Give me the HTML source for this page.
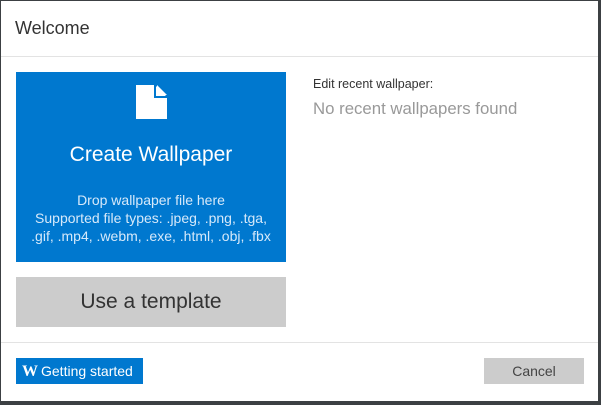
<!DOCTYPE html>
<html><head><style>
html,body{margin:0;padding:0;}
body{width:601px;height:405px;background:#3c4043;position:relative;overflow:hidden;font-family:"Liberation Sans",Arial,sans-serif;}
.dlg{position:absolute;left:1px;top:1px;width:597px;height:400px;background:#fff;}
.title{position:absolute;left:14px;top:17px;font-size:18px;color:#333;}
.sep{position:absolute;left:0;width:597px;height:1px;background:#e3e3e3;}
.blue{position:absolute;left:15px;top:71px;width:270px;height:190px;background:#0078cf;color:#fff;text-align:center;}
.blue h1{margin:0;position:absolute;top:71px;width:100%;font-size:21px;font-weight:normal;}
.blue p{margin:0;position:absolute;top:119px;width:100%;font-size:14px;line-height:18px;color:#d6e9fa;}
.tmpl{position:absolute;left:15px;top:276px;width:270px;height:50px;background:#cccccc;color:#333;font-size:21px;text-align:center;line-height:50px;}
.edit{position:absolute;left:312px;top:76px;font-size:12.5px;color:#333;}
.none{position:absolute;left:312px;top:98px;font-size:16.8px;color:#999;}
.gs{position:absolute;left:15px;top:357px;width:127px;height:26px;background:#0078cf;color:#fff;font-size:14px;line-height:26px;}
.gs b{font-family:"Liberation Serif",serif;font-size:16px;margin-left:6px;margin-right:3px;}
.cancel{position:absolute;left:483px;top:357px;width:100px;height:26px;background:#cccccc;color:#444;font-size:14px;line-height:26px;text-align:center;}
</style></head><body>
<div class="dlg">
<div class="title">Welcome</div>
<div class="sep" style="top:55px"></div>
<div class="blue">
<svg style="position:absolute;left:120px;top:13px" width="32" height="34" viewBox="0 0 32 34"><path d="M0 0H19L31 12V34H0Z" fill="#fff"/><path d="M21 0L31 10H21Z" fill="#fff"/><path d="M19 0V12H31" fill="none" stroke="#0078cf" stroke-width="2"/></svg>
<h1>Create Wallpaper</h1>
<p>Drop wallpaper file here<br>Supported file types: .jpeg, .png, .tga,<br>.gif, .mp4, .webm, .exe, .html, .obj, .fbx</p>
</div>
<div class="tmpl">Use a template</div>
<div class="edit">Edit recent wallpaper:</div>
<div class="none">No recent wallpapers found</div>
<div class="sep" style="top:341px"></div>
<div class="gs"><b>W</b>Getting started</div>
<div class="cancel">Cancel</div>
</div>
</body></html>
